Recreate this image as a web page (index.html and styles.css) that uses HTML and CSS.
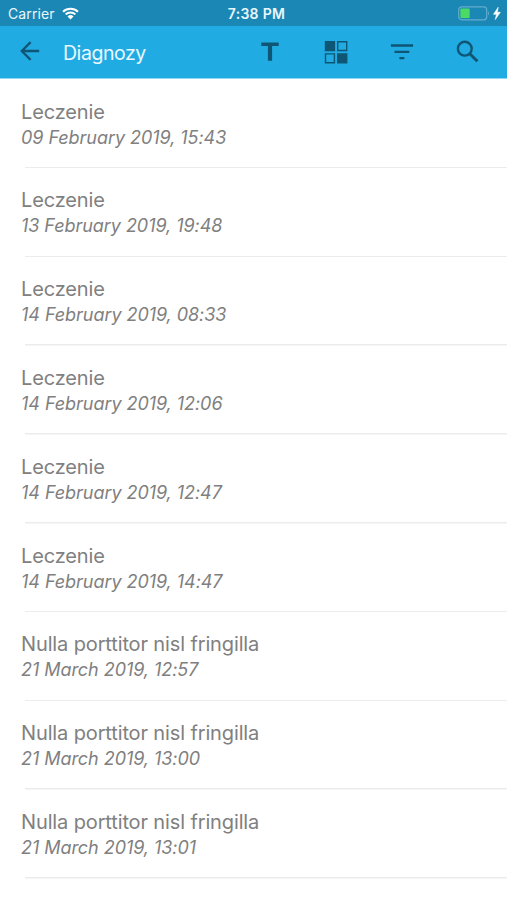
FILE: index.html
```html
<!DOCTYPE html>
<html lang="pl">
<head>
    <meta charset="UTF-8">
    <meta name="viewport" content="width=device-width, initial-scale=1.0">
    <title>Diagnozy</title>
    <link rel="stylesheet" href="styles.css">
</head>
<body>
    <div class="status-bar">
        <div class="carrier">
            <span>Carrier</span>
            <svg width="17" height="13" viewBox="0 0 17 13">
                <path d="M1 4.7a10.8 10.8 0 0 1 15 0M3.6 7.4a7 7 0 0 1 9.8 0" fill="none" stroke="#fff" stroke-width="2"/>
                <path d="M5.5 9.4a4.4 4.4 0 0 1 6 0l-3 3.1z" fill="#fff"/>
            </svg>
        </div>
        <span class="time">7:38 PM</span>
        <div class="battery">
            <svg width="44" height="15" viewBox="0 0 44 15">
                <rect x=".7" y=".8" width="28" height="13" rx="3" fill="none" stroke="#65add0" stroke-width="1.2"/>
                <rect x="2.4" y="2.5" width="9.3" height="9.6" rx="1" fill="#4cd964"/>
                <path d="M30 5.2q2 2 0 4.4z" fill="#65add0"/>
                <path d="M40.2 1.3l-4.7 7h3l-1.2 5.2 5-7.2h-3z" fill="#fff" stroke="#fff" stroke-width=".6"/>
            </svg>
        </div>
    </div>
    <div class="toolbar">
        <button class="back">
            <svg width="20" height="20" viewBox="0 0 20 20" fill="none" stroke="#0f5674" stroke-width="2.3">
                <path d="M19.2 10H2M10.6 1.1L1.8 10l8.8 8.9"/>
            </svg>
        </button>
        <h1>Diagnozy</h1>
        <div class="actions">
            <button>
                <svg width="24" height="24" viewBox="0 0 24 24" fill="#0f5674">
                    <path d="M3.3 2.4h17.4v3.7h-6.6v14.7H9.9V6.1H3.3z"/>
                </svg>
            </button>
            <button>
                <svg width="24" height="24" viewBox="0 0 24 24">
                    <path d="M.8 1h10.3v10.2H.8zM13 13.2h10.4v10.2H13z" fill="#0f5674"/>
                    <path d="M13.7 1.7h9v8.8h-9zM1.5 13.9h8.9v8.8H1.5z" fill="none" stroke="#0f5674" stroke-width="1.4"/>
                </svg>
            </button>
            <button>
                <svg width="24" height="24" viewBox="0 0 24 24" fill="#0f5674">
                    <path d="M.9 4.3h22.2v2.4H.9zM4.5 10.7h14.8V13H4.5zM9.4 16.9h5v2.4h-5z"/>
                </svg>
            </button>
            <button>
                <svg width="24" height="24" viewBox="0 0 24 24" fill="none" stroke="#0f5674">
                    <circle cx="8.8" cy="8.7" r="6.9" stroke-width="2.4"/>
                    <path d="M14 14l7.4 7.3" stroke-width="3"/>
                </svg>
            </button>
        </div>
    </div>
    <ul class="list">
        <li><p class="name">Leczenie</p><p class="date">09 February 2019, 15:43</p></li>
        <li><p class="name">Leczenie</p><p class="date">13 February 2019, 19:48</p></li>
        <li><p class="name">Leczenie</p><p class="date">14 February 2019, 08:33</p></li>
        <li><p class="name">Leczenie</p><p class="date">14 February 2019, 12:06</p></li>
        <li><p class="name">Leczenie</p><p class="date">14 February 2019, 12:47</p></li>
        <li><p class="name">Leczenie</p><p class="date">14 February 2019, 14:47</p></li>
        <li><p class="name">Nulla porttitor nisl fringilla</p><p class="date">21 March 2019, 12:57</p></li>
        <li><p class="name">Nulla porttitor nisl fringilla</p><p class="date">21 March 2019, 13:00</p></li>
        <li><p class="name">Nulla porttitor nisl fringilla</p><p class="date">21 March 2019, 13:01</p></li>
    </ul>
</body>
</html>
```
FILE: styles.css
```css
/* styles.css */

* {
    box-sizing: border-box;
    margin: 0;
    padding: 0;
}

body {
    font-family: Inter, "Liberation Sans", sans-serif;
    background: #fff;
    color: #808080;
    height: 900px;
    overflow: hidden;
}

svg {
    display: block;
}

.status-bar {
    display: grid;
    grid-template-columns: 1fr auto 1fr;
    align-items: center;
    height: 26px;
    padding: 1px 5px 0 8px;
    background: #1b87b4;
    color: #e9f6fc;
    font-size: 14px;
}

.carrier {
    display: flex;
    align-items: center;
    gap: 7px;
    letter-spacing: 0.1px;
}

.time {
    font-weight: 600;
    letter-spacing: 0.3px;
    padding-left: 3px;
}

.battery {
    justify-self: end;
}

.toolbar {
    display: flex;
    align-items: center;
    height: 53px;
    padding: 0 27px 0 20px;
    background: #21abe3;
    border-bottom: 1px solid #8fd6f3;
}

.toolbar h1 {
    margin-left: 23px;
    padding-top: 1px;
    color: #e9f8ff;
    font-size: 19.5px;
    font-weight: 400;
    letter-spacing: -0.45px;
}

.toolbar button {
    border: none;
    background: none;
    cursor: pointer;
}

.toolbar .back {
    padding-bottom: 2px;
}

.actions {
    display: flex;
    gap: 42px;
    margin-left: auto;
}

.list {
    list-style: none;
    padding-top: 0.6px;
}

.list li {
    height: 88.8px;
    padding: 19px 0 0 21px;
    background: linear-gradient(#ececec, #ececec) no-repeat 25px 100% / 100% 1.5px;
}

.name {
    font-size: 20px;
    line-height: 26px;
    letter-spacing: -0.13px;
}

.date {
    font-size: 18px;
    font-style: italic;
    line-height: 25px;
    letter-spacing: -0.05px;
}
```
